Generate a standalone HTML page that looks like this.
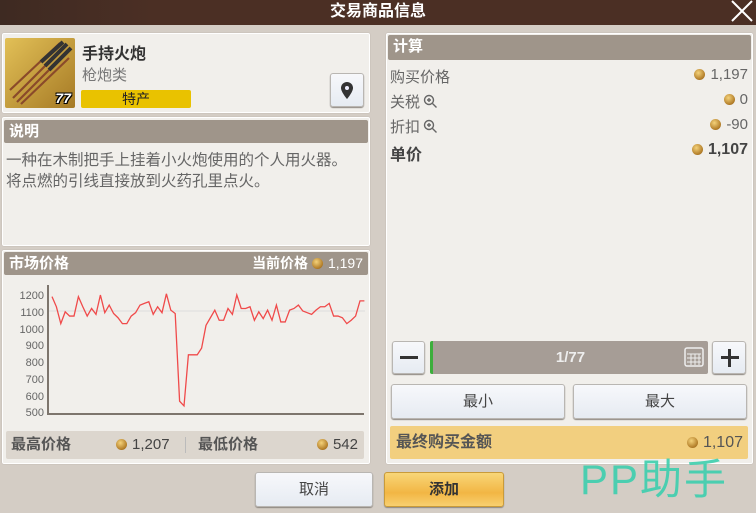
<!DOCTYPE html><html><head><meta charset="utf-8"><style>
*{margin:0;padding:0;box-sizing:border-box}
body{width:756px;height:513px;overflow:hidden;background:#d4cdc5;font-family:"Liberation Sans","Noto Sans CJK SC",sans-serif;position:relative;color:#555}
.a{position:absolute}
.panel{position:absolute;background:#f1efeb;border:1px solid #fff;border-radius:2px;box-shadow:0 0 1px #a9a097}
.hdr{position:absolute;background:#9f958a;color:#fff;font-weight:bold;font-size:15px;line-height:23px;padding-left:5px;border-radius:2px}
.coin{display:inline-block;width:11px;height:11px;border-radius:50%;background:radial-gradient(circle at 40% 35%,#f4d27a,#b07a26 70%,#6b4512);vertical-align:-1px;margin-right:5px}
.btn{position:absolute;background:linear-gradient(#f7f8fb,#e6ebf2);border:1px solid #b9b6b2;border-radius:3px;box-shadow:0 1px 1px #8c8680;text-align:center;color:#444;font-size:15px}
.row{position:absolute;left:390px;width:358px;font-size:15px;color:#666}
.row span.r{position:absolute;right:0}
.mg{display:inline-block;vertical-align:-2px;margin-left:3px}
</style></head><body>
<div class="a" style="left:0;top:0;width:756px;height:25px;background:linear-gradient(90deg,#3e2a22,#4b2f24 20%,#4b2f24);"></div>
<div class="a" style="left:0;top:1px;width:756px;text-align:center;color:#fff;font-weight:bold;font-size:16px;line-height:22px">交易商品信息</div>
<svg class="a" style="left:730px;top:0" width="26" height="24"><path d="M2 1L22 21M22 1L2 21" stroke="#fff" stroke-width="2"/></svg>

<div class="panel" style="left:2px;top:33px;width:368px;height:80px"></div>
<div class="a" style="left:5px;top:38px;width:70px;height:70px;background:linear-gradient(135deg,#e2c057,#a67a25);border-radius:2px;overflow:hidden">
<svg width="70" height="70"><g stroke-width="2.2"><path d="M8 60L60 8M12 64L62 14M5 52L55 5M16 66L64 20" stroke="#8a4a2a"/><path d="M40 28L62 6M44 32L66 10M36 24L58 4" stroke="#333" stroke-width="4"/></g></svg>
<div class="a" style="right:4px;bottom:2px;color:#fff;font-weight:bold;font-style:italic;font-size:14px;text-shadow:1px 1px 0 #000,-1px -1px 0 #000,1px -1px 0 #000,-1px 1px 0 #000">77</div></div>
<div class="a" style="left:82px;top:40px;font-size:16px;font-weight:bold;color:#333">手持火炮</div>
<div class="a" style="left:82px;top:64px;font-size:15px;color:#777">枪炮类</div>
<div class="a" style="left:81px;top:90px;width:110px;height:18px;background:#e9c200;border-radius:2px;text-align:center;font-size:14px;line-height:18px;color:#222">特产</div>
<div class="btn" style="left:330px;top:73px;width:34px;height:34px"><svg width="32" height="32"><path d="M16 8a6 6 0 0 0-6 6c0 4 6 11 6 11s6-7 6-11a6 6 0 0 0-6-6z" fill="#333"/><circle cx="16" cy="14" r="2" fill="#eef"/></svg></div>

<div class="panel" style="left:2px;top:117px;width:368px;height:129px"></div>
<div class="hdr" style="left:4px;top:120px;width:364px">说明</div>
<div class="a" style="left:6px;top:150px;font-size:15.5px;line-height:21px;color:#666">一种在木制把手上挂着小火炮使用的个人用火器。<br>将点燃的引线直接放到火药孔里点火。</div>

<div class="panel" style="left:2px;top:250px;width:368px;height:214px"></div>
<div class="hdr" style="left:4px;top:252px;width:364px">市场价格<span style="position:absolute;right:5px;font-size:14px">当前价格 <span class="coin"></span><span style="font-weight:normal">1,197</span></span></div>
<svg class="a" style="left:0;top:0" width="380" height="430">
<line x1="48" y1="311" x2="365" y2="311" stroke="#ddd" stroke-width="1"/>
<path d="M48 285V414H364" fill="none" stroke="#7d756d" stroke-width="2"/>
<g font-size="11" fill="#666" text-anchor="end" font-family="Liberation Sans">
<text x="44" y="299">1200</text><text x="44" y="316">1100</text><text x="44" y="333">1000</text><text x="44" y="349">900</text><text x="44" y="366">800</text><text x="44" y="383">700</text><text x="44" y="400">600</text><text x="44" y="416">500</text></g>
<polyline transform="translate(52,413) scale(4.4,-0.1686) translate(0,-500)" vector-effect="non-scaling-stroke" fill="none" stroke="#f04a4a" stroke-width="1.3" points="0,1190 1,1130 2,1030 3,1100 4,1075 5,1075 6,1190 7,1130 8,1075 9,1120 10,1085 11,1200 12,1095 13,1140 14,1090 15,1065 16,1030 17,1030 18,1075 19,1095 20,1140 21,1150 22,1160 23,1085 24,1130 25,1095 26,1207 27,1110 28,1090 29,570 30,542 31,845 32,845 33,845 34,885 35,1020 36,1065 37,1110 38,1050 39,1050 40,1120 41,1085 42,1200 43,1120 44,1120 45,1130 46,1050 47,1100 48,1060 49,1110 50,1050 51,1140 52,1040 53,1040 54,1110 55,1120 56,1140 57,1105 58,1095 59,1085 60,1110 61,1130 62,1130 63,1150 64,1075 65,1075 66,1065 67,1030 68,1050 69,1075 70,1165 71,1165"/>
</svg>
<div class="a" style="left:6px;top:431px;width:358px;height:28px;background:#dcd6ce;border-radius:2px;font-size:15px;line-height:28px;color:#555">
<span class="a" style="left:5px;font-weight:bold">最高价格</span><span class="a" style="left:110px;color:#444"><span class="coin"></span>1,207</span>
<span class="a" style="left:179px;top:6px;width:1px;height:16px;background:#bbb"></span>
<span class="a" style="left:192px;font-weight:bold">最低价格</span><span class="a" style="right:6px;color:#444"><span class="coin"></span>542</span></div>

<div class="panel" style="left:386px;top:33px;width:367px;height:431px"></div>
<div class="hdr" style="left:388px;top:35px;width:363px;height:25px">计算</div>
<div class="row" style="top:66px">购买价格<span class="r"><span class="coin"></span>1,197</span></div>
<div class="row" style="top:91px">关税<svg class="mg" width="15" height="15"><circle cx="6" cy="6" r="4.5" fill="none" stroke="#666" stroke-width="1.4"/><path d="M4 6H8M6 4V8M9.5 9.5L13.5 13.5" stroke="#666" stroke-width="1.4"/></svg><span class="r"><span class="coin"></span>0</span></div>
<div class="row" style="top:116px">折扣<svg class="mg" width="15" height="15"><circle cx="6" cy="6" r="4.5" fill="none" stroke="#666" stroke-width="1.4"/><path d="M4 6H8M6 4V8M9.5 9.5L13.5 13.5" stroke="#666" stroke-width="1.4"/></svg><span class="r"><span class="coin"></span>-90</span></div>
<div class="row" style="top:141px;font-weight:bold;color:#444;font-size:16px">单价<span class="r"><span class="coin"></span>1,107</span></div>

<div class="btn" style="left:392px;top:341px;width:33px;height:33px"><div class="a" style="left:7px;top:14px;width:18px;height:3px;background:#333"></div></div>
<div class="a" style="left:430px;top:341px;width:278px;height:33px;background:#a69d96;border-radius:2px;border-left:3px solid #3cae3c;text-align:center;color:#eee;font-weight:bold;font-size:15px;line-height:33px">1/77
<svg class="a" style="right:4px;top:6px" width="20" height="20"><rect x="1" y="1" width="18" height="18" rx="2" fill="none" stroke="#eee" stroke-width="1.5"/><path d="M3 7H17M3 11H17M3 15H17M7 7V18M11 7V18M15 7V18" stroke="#eee"/></svg></div>
<div class="btn" style="left:712px;top:341px;width:34px;height:33px"><div class="a" style="left:8px;top:14px;width:18px;height:3px;background:#333"></div><div class="a" style="left:15px;top:7px;width:3px;height:18px;background:#333"></div></div>
<div class="btn" style="left:391px;top:384px;width:174px;height:35px;line-height:33px">最小</div>
<div class="btn" style="left:573px;top:384px;width:174px;height:35px;line-height:33px">最大</div>
<div class="a" style="left:390px;top:426px;width:358px;height:33px;background:#f2cf7f;border-radius:2px;font-size:16px;line-height:33px;color:#555"><span class="a" style="left:6px;font-weight:bold">最终购买金额</span><span class="a" style="right:5px"><span class="coin"></span>1,107</span></div>

<div class="btn" style="left:255px;top:472px;width:118px;height:35px;line-height:34px">取消</div>
<div class="btn" style="left:384px;top:472px;width:120px;height:35px;line-height:34px;background:linear-gradient(#f8d678,#f2b644 60%,#f8d070);border-color:#c99b3a;font-weight:bold;color:#333">添加</div>
<div class="a" style="left:580px;top:446px;font-size:42px;color:#3dcfae;opacity:.9;letter-spacing:2px">PP助手</div>
</body></html>
